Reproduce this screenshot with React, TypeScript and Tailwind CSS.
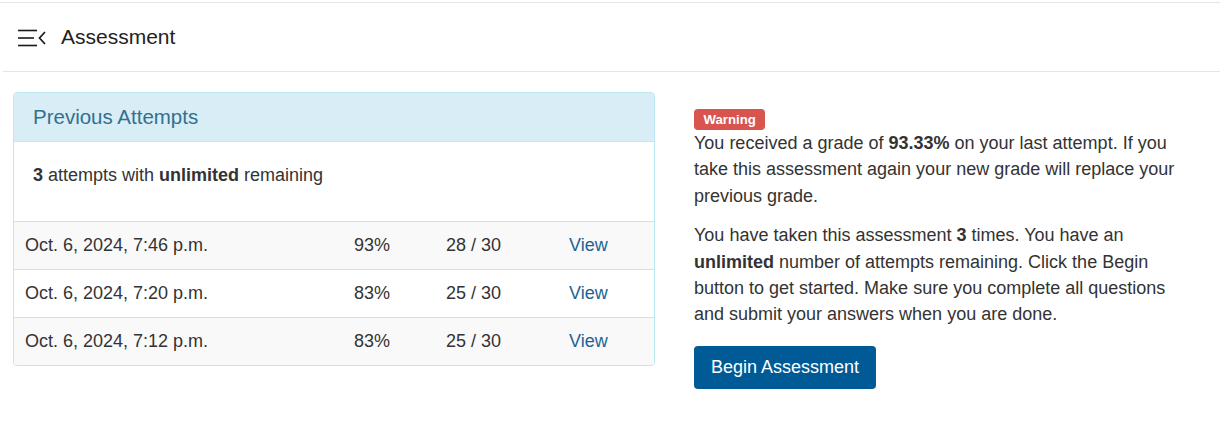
import React from "react";

const rows = [
  { date: "Oct. 6, 2024, 7:46 p.m.", pct: "93%", score: "28 / 30" },
  { date: "Oct. 6, 2024, 7:20 p.m.", pct: "83%", score: "25 / 30" },
  { date: "Oct. 6, 2024, 7:12 p.m.", pct: "83%", score: "25 / 30" },
];

export default function App() {
  return (
    <div
      className="w-[1220px] h-[426px] bg-white text-[#333] overflow-hidden"
      style={{ fontFamily: '"Liberation Sans", Arial, sans-serif' }}
    >
      <div className="h-[2px]" />
      <div className="border-t border-[#e5e5e5]" />
      <div className="ml-[3px] h-[69px] border-b border-[#e5e5e5] flex items-center">
        <svg width="30" height="20" viewBox="0 0 30 20" className="ml-[15px] mt-[1px]">
          <line x1="0" y1="2.5" x2="19" y2="2.5" stroke="#1a1a1a" strokeWidth="1.6" />
          <line x1="0" y1="10" x2="16" y2="10" stroke="#1a1a1a" strokeWidth="1.6" />
          <line x1="0" y1="17.5" x2="19" y2="17.5" stroke="#1a1a1a" strokeWidth="1.6" />
          <polyline points="27,4 21.5,10 27,16" fill="none" stroke="#1a1a1a" strokeWidth="1.7" />
        </svg>
        <span className="ml-[13px] text-[21px] text-[#222]">Assessment</span>
      </div>

      <div className="flex items-start pt-[20px]">
        <div className="ml-[13px] w-[642px] border border-[#bce8f1] rounded-[4px] overflow-hidden text-[18px] leading-[26.4px]">
          <div className="h-[49px] bg-[#d9edf7] border-b border-[#bce8f1] flex items-center pl-[19px] text-[20.5px] text-[#31708f]">
            Previous Attempts
          </div>
          <div className="pl-[19px] pt-[20px] pb-[32.6px]">
            <b>3</b> attempts with <b>unlimited</b> remaining
          </div>
          {rows.map((r, i) => (
            <div
              key={i}
              className={`grid grid-cols-[329px_92px_123px_96px] border-t border-[#ddd] py-[10.3px] ${
                i % 2 === 0 ? "bg-[#f9f9f9]" : "bg-white"
              }`}
            >
              <div className="pl-[11px]">{r.date}</div>
              <div className="pl-[11px]">{r.pct}</div>
              <div className="pl-[11px]">{r.score}</div>
              <div className="pl-[11px] text-[#1a6496]">View</div>
            </div>
          ))}
        </div>

        <div className="ml-[39px] w-[494px] pt-[17px] text-[18px] leading-[26.4px]">
          <div className="h-[21px] flex">
            <span className="bg-[#d9534f] text-white font-bold text-[13.2px] leading-[21px] px-[9.5px] rounded-[4px]">
              Warning
            </span>
          </div>
          <p className="mb-[13px]">
            You received a grade of <b>93.33%</b> on your last attempt. If you take this assessment again your new grade
            will replace your previous grade.
          </p>
          <p className="mb-[18px]">
            You have taken this assessment <b>3</b> times. You have an <b>unlimited</b> number of attempts remaining.
            Click the Begin button to get started. Make sure you complete all questions and submit your answers when you
            are done.
          </p>
          <button className="h-[43px] px-[17px] bg-[#005a96] text-white rounded-[4px] text-[18px]">
            Begin Assessment
          </button>
        </div>
      </div>
    </div>
  );
}
